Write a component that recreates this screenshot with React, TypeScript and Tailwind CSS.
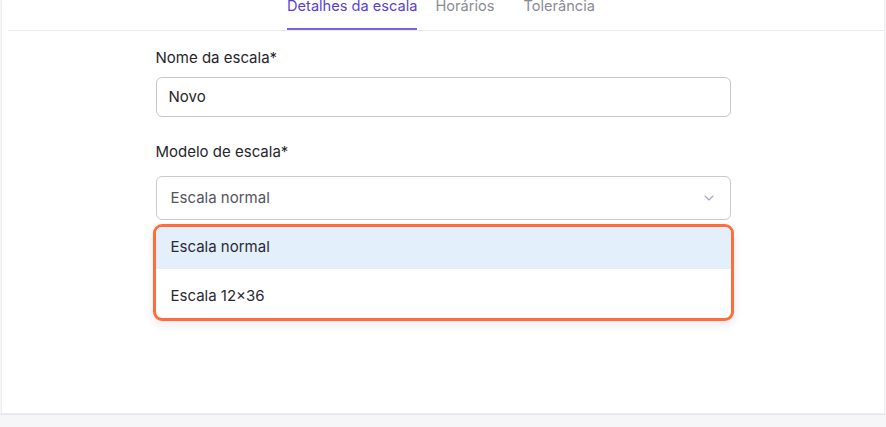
import { ChevronDown } from "lucide-react";

const font = { fontFamily: "Inter, 'Noto Sans', sans-serif" };

export default function App() {
  return (
    <div className="h-[427px] w-[886px] overflow-hidden bg-[#f6f6f8]" style={font}>
      {/* Card */}
      <div className="-mt-[10px] ml-[1px] mr-[1px] flex h-[424px] flex-col rounded-t-xl border border-[#ececf1] bg-white">
        {/* Tabs */}
        <div className="ml-[6px] flex h-[40px] items-end border-b border-[#ebebef] pl-[279px] text-[14.6px]">
          <div className="flex h-full flex-col justify-between">
            <span className="pt-[5px] leading-[20px] text-[#5b3fd3]">Detalhes da escala</span>
            <div className="h-[2px] bg-[#7a60e2]" />
          </div>
          <span className="ml-[18px] self-start pt-[5px] leading-[20px] text-[#8b8b95]">Horários</span>
          <span className="ml-[29px] self-start pt-[5px] leading-[20px] text-[#8b8b95]">Tolerância</span>
        </div>

        {/* Form */}
        <div className="mx-auto mt-[17px] flex w-[575px] flex-col text-[15px] text-[#26262b]">
          <label className="leading-[20px]">Nome da escala*</label>
          <div className="mt-[9px] flex h-[40px] items-center rounded-md border border-[#c6c6ce] px-[12px]">
            Novo
          </div>

          <label className="mt-[25px] leading-[20px]">Modelo de escala*</label>
          <div className="mt-[14px] flex h-[44px] items-center justify-between rounded-md border border-[#c9c9d1] pl-[14px] pr-[13px] text-[#55555c]">
            <span>Escala normal</span>
            <ChevronDown className="size-[16px] text-[#aaa4cc]" strokeWidth={1.6} />
          </div>

          {/* Dropdown */}
          <div className="-mx-[3px] mt-[4px] overflow-hidden rounded-[9px] border-[3px] border-[#ff6d3b] bg-white shadow-[0_4px_10px_rgba(80,80,120,0.12)]">
            <div className="flex h-[41px] items-center bg-[#e3f0fc] pl-[15px] text-[#2a2a30]">
              Escala normal
            </div>
            <div className="h-px bg-[#ececf0]" />
            <div className="flex h-[49px] items-center pl-[15px] pt-[5px] text-[#2a2a30]">
              Escala 12×36
            </div>
          </div>
        </div>
      </div>
      <div className="h-px bg-[#e6e6ec]" />
    </div>
  );
}
